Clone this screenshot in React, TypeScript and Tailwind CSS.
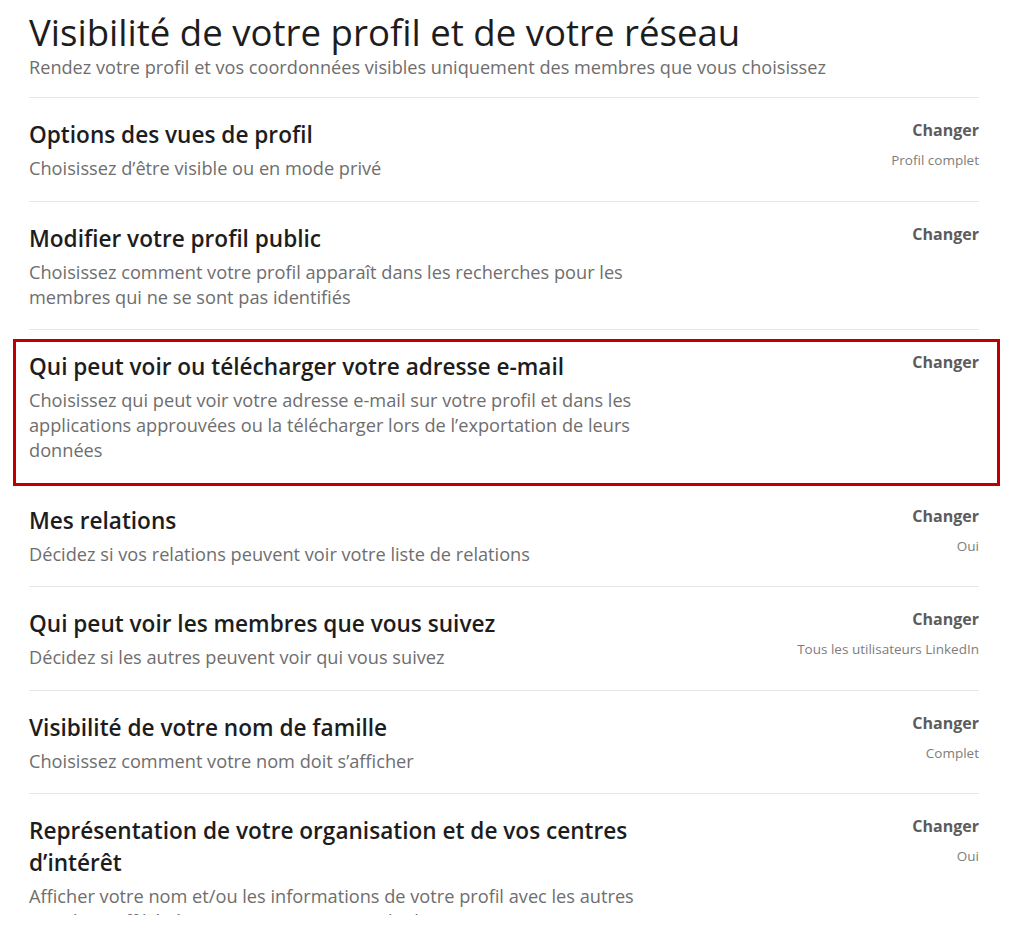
import React from 'react';

type Setting = {
  title: string[];
  description: string[];
  value?: string;
  highlighted?: boolean;
};

const settings: Setting[] = [
  {
    title: ['Options des vues de profil'],
    description: ['Choisissez d’être visible ou en mode privé'],
    value: 'Profil complet',
  },
  {
    title: ['Modifier votre profil public'],
    description: [
      'Choisissez comment votre profil apparaît dans les recherches pour les',
      'membres qui ne se sont pas identifiés',
    ],
  },
  {
    title: ['Qui peut voir ou télécharger votre adresse e-mail'],
    description: [
      'Choisissez qui peut voir votre adresse e-mail sur votre profil et dans les',
      'applications approuvées ou la télécharger lors de l’exportation de leurs',
      'données',
    ],
    highlighted: true,
  },
  {
    title: ['Mes relations'],
    description: ['Décidez si vos relations peuvent voir votre liste de relations'],
    value: 'Oui',
  },
  {
    title: ['Qui peut voir les membres que vous suivez'],
    description: ['Décidez si les autres peuvent voir qui vous suivez'],
    value: 'Tous les utilisateurs LinkedIn',
  },
  {
    title: ['Visibilité de votre nom de famille'],
    description: ['Choisissez comment votre nom doit s’afficher'],
    value: 'Complet',
  },
  {
    title: ['Représentation de votre organisation et de vos centres', 'd’intérêt'],
    description: [
      'Afficher votre nom et/ou les informations de votre profil avec les autres',
      'membres affiliés à votre entreprise sur LinkedIn',
    ],
    value: 'Oui',
  },
];

const SettingRow: React.FC<{ item: Setting }> = ({ item }) => (
  <div className="relative flex justify-between border-t border-[#e6e6e6] pt-[21px] pb-[19.5px]">
    <div className="max-w-[660px]">
      <h3 className="text-[22.6px] leading-[32px] font-semibold text-[#1d1d1d]">
        {item.title.map((line) => (
          <span key={line} className="block whitespace-nowrap">{line}</span>
        ))}
      </h3>
      <p className="mt-[5px] text-[18.2px] leading-[25px] text-[#6e6e6e]">
        {item.description.map((line) => (
          <span key={line} className="block whitespace-nowrap">{line}</span>
        ))}
      </p>
    </div>
    <div className="flex flex-col items-end pt-[1px]">
      <button className="text-[16px] leading-[20px] font-bold text-[#5c5c5c]">Changer</button>
      {item.value && (
        <span className="mt-[10px] text-[13.5px] leading-[20px] text-[#7d7d7d]">{item.value}</span>
      )}
    </div>
    {item.highlighted && (
      <div className="pointer-events-none absolute top-[9px] -bottom-[3px] -left-[16px] -right-[21px] z-10 border-[3px] border-[#c00000]" />
    )}
  </div>
);

const App: React.FC = () => {
  return (
    <div
      className="h-[915px] w-[1024px] overflow-hidden bg-white"
      style={{ fontFamily: '"Open Sans", "Noto Sans", sans-serif' }}
    >
      <div className="ml-[29px] w-[950px] pt-[9px]">
        <h1 className="text-[36.6px] leading-[46px] font-normal text-[#1d1d1d]">
          Visibilité de votre profil et de votre réseau
        </h1>
        <p className="text-[18.15px] leading-[24px] text-[#6e6e6e]">
          Rendez votre profil et vos coordonnées visibles uniquement des membres que vous choisissez
        </p>
        <div className="mt-[18px]">
          {settings.map((item) => (
            <SettingRow key={item.title[0]} item={item} />
          ))}
        </div>
      </div>
    </div>
  );
};

export default App;
